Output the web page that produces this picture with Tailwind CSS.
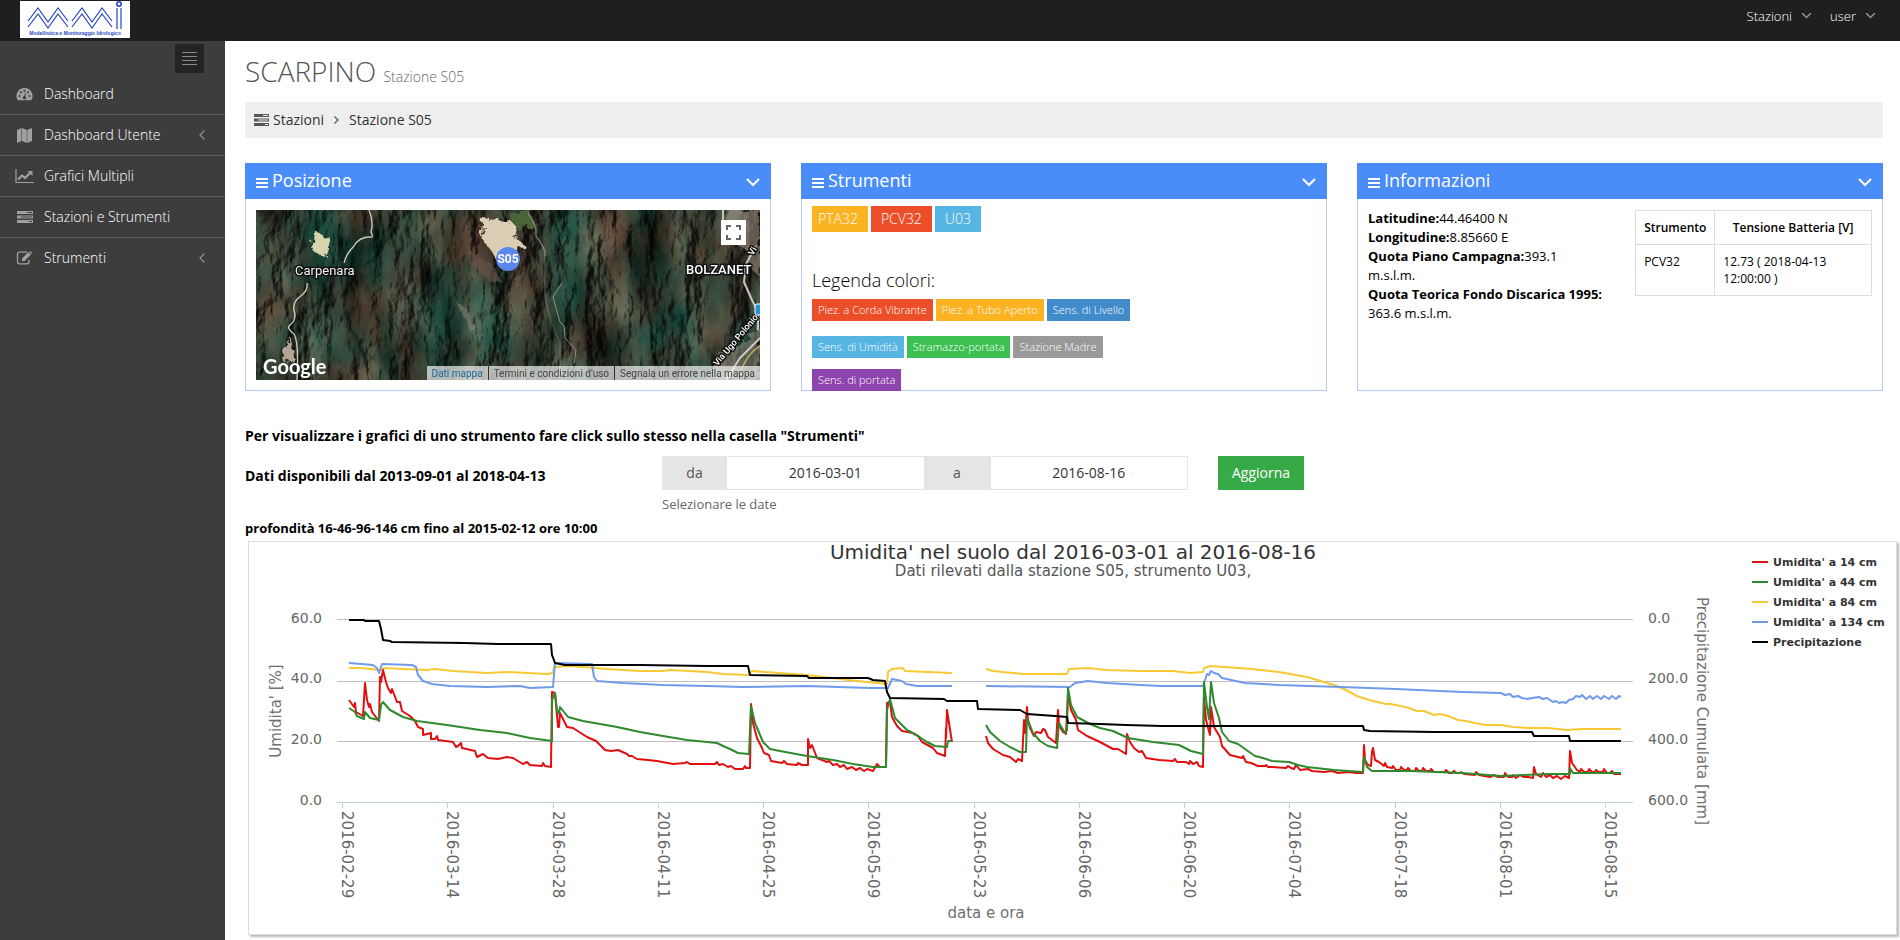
<!DOCTYPE html>
<html lang="it">
<head>
  <meta charset="UTF-8">
  <meta name="viewport" content="width=device-width, initial-scale=1.0">
  <title>SCARPINO - Stazione S05</title>
  <script src="https://cdn.jsdelivr.net/npm/@tailwindcss/browser@4"></script>
</head>
<body class="min-h-screen flex flex-col bg-white font-['Open_Sans','Noto_Sans',sans-serif] text-[13px] text-black">

  <!-- Barra superiore -->
  <header class="h-[41px] bg-[#1f1f1f] flex items-start justify-between pl-5 pr-6 shrink-0">
    <a href="#" aria-label="MMI" class="mt-px">
      <svg width="110" height="37" viewBox="0 0 110 37" class="bg-white">
        <g fill="none" stroke="#2447c0" stroke-width="1.2">
          <path d="M8 20 18 7 28 21 38 7 48 20M8 26 18 13 28 27 38 13 48 26"/>
          <path d="M52 20 62 7 72 21 82 7 92 20M52 26 62 13 72 27 82 13 92 26"/>
          <path d="M97 7V28M101 7V28"/>
          <circle cx="99" cy="3" r="2.2" stroke-width="1.6"/>
        </g>
        <text x="55" y="34" text-anchor="middle" font-family="'Liberation Sans', sans-serif" font-weight="700" font-size="5" fill="#2447c0">Modellistica e Monitoraggio Idrologico</text>
      </svg>
    </a>
    <nav class="flex gap-[18px] font-light text-white leading-8">
      <a href="#" class="flex items-center gap-[9px]">Stazioni
        <svg width="11" height="6" viewBox="0 0 11 6" fill="none" stroke="#8f8f9b" stroke-width="1.5"><path d="M1 0 5.500 4.500 10 0"/></svg>
      </a>
      <a href="#" class="flex items-center gap-[9px]">user
        <svg width="11" height="6" viewBox="0 0 11 6" fill="none" stroke="#8f8f9b" stroke-width="1.5"><path d="M1 0 5.500 4.500 10 0"/></svg>
      </a>
    </nav>
  </header>

  <div class="flex flex-1">

    <!-- Menu laterale -->
    <aside class="w-[225px] shrink-0 bg-[#3d3d3d]">
      <div class="flex justify-end pt-[3px] pr-[21px]">
        <button aria-label="Menu" class="w-[29px] h-[29px] bg-[#242424] flex items-center justify-center">
          <svg width="15" height="14" viewBox="0 0 15 14" stroke="#8a8a8a" stroke-width="1"><path d="M0 .5H15M0 4.500H15M0 8.500H15M0 12.500H15"/></svg>
        </button>
      </div>
      <ul class="text-sm font-light text-white">
        <li>
          <a href="#" class="flex items-center h-[41px] pl-4 pr-5 gap-[11px]">
            <svg width="17" height="14" viewBox="0 0 17 14"><path fill="#a0a0a0" d="M8.500 1A8 8 0 0 0 1.700 13.300h13.600A8 8 0 0 0 8.500 1z"/><g fill="#3d3d3d"><circle cx="3.500" cy="9" r="1.100"/><circle cx="5" cy="5.300" r="1.100"/><circle cx="8.500" cy="3.800" r="1.100"/><circle cx="12" cy="5.300" r="1.100"/><circle cx="13.500" cy="9" r="1.100"/><circle cx="8.500" cy="10.700" r="1.700"/></g><path stroke="#3d3d3d" stroke-width="1" d="M8.500 10.500 9.500 6"/></svg>
            Dashboard
          </a>
        </li>
        <li class="border-t border-[#5c5c5c]">
          <a href="#" class="flex items-center h-10 pl-4 pr-5 gap-[11px]">
            <svg width="17" height="17" viewBox="0 0 17 17" fill="#a0a0a0"><path d="M1 3 5.500 1V14L1 16zM6 1 10.800 3V16L6 14zM11.300 3 16 1V14L11.300 16z"/></svg>
            <span class="flex-1">Dashboard Utente</span>
            <svg width="6" height="10" viewBox="0 0 6 10" fill="none" stroke="#8f8f8f" stroke-width="1.300"><path d="M5.500 .5 1 5 5.500 9.500"/></svg>
          </a>
        </li>
        <li class="border-t border-[#5c5c5c]">
          <a href="#" class="flex items-center h-10 pl-[15px] pr-5 gap-2.5">
            <svg width="19" height="15" viewBox="0 0 19 15"><path fill="none" stroke="#a0a0a0" stroke-width="1.200" d="M1 0V13.500H19"/><path fill="none" stroke="#a0a0a0" stroke-width="2.200" d="M3 10.500 7 6.500 10 9 15 4"/><path fill="#a0a0a0" d="M12.500 2H17.500V7z"/></svg>
            Grafici Multipli
          </a>
        </li>
        <li class="border-t border-[#5c5c5c]">
          <a href="#" class="flex items-center h-10 pl-4 pr-5 gap-[11px]">
            <svg width="17" height="14" viewBox="0 0 17 14"><path fill="#a0a0a0" d="M1 1H17V4H1zM1 5.500H17V8.500H1zM1 10H17V13H1z"/><path stroke="#3d3d3d" d="M11 2.500H16M5 7H16M13 11.500H16"/></svg>
            Stazioni e Strumenti
          </a>
        </li>
        <li class="border-t border-[#5c5c5c]">
          <a href="#" class="flex items-center h-10 pl-4 pr-5 gap-[11px]">
            <svg width="17" height="14" viewBox="0 0 17 14"><path fill="none" stroke="#a0a0a0" stroke-width="1.300" d="M11 1.200H3.500Q1.500 1.200 1.500 3.200V10.800Q1.500 12.800 3.500 12.800H11Q13 12.800 13 10.800V9"/><path fill="#a0a0a0" d="M6 7.500 12.500 1 15 3.500 8.500 10H6zM13.300 .4 14.200 0 16.500 2.200 15.700 2.900z"/></svg>
            <span class="flex-1">Strumenti</span>
            <svg width="6" height="10" viewBox="0 0 6 10" fill="none" stroke="#8f8f8f" stroke-width="1.300"><path d="M5.500 .5 1 5 5.500 9.500"/></svg>
          </a>
        </li>
      </ul>
    </aside>

    <main class="flex-1 min-w-0 pl-5 pr-[17px] pb-[5px]">
      <h1 class="text-[28px] leading-[61px] font-light text-[#555]">SCARPINO <small class="text-sm text-[#666]">Stazione S05</small></h1>

      <nav class="flex items-center h-9 bg-[#eee] px-[9px] text-sm text-[#333]">
        <svg class="mr-1" width="15" height="12" viewBox="0 0 15 12"><path fill="#555" d="M0 0H15V3H0zM0 4.500H15V7.500H0zM0 9H15V12H0z"/><path stroke="#eee" d="M9 1.500H14M4 6H14M11 10.500H14"/></svg>
        <a href="#">Stazioni</a>
        <svg class="mx-[10px]" width="5" height="8" viewBox="0 0 5 8" fill="none" stroke="#555" stroke-width="1.200"><path d="M.5 .5 4 4 .5 7.500"/></svg>
        <a href="#">Stazione S05</a>
      </nav>

      <div class="grid grid-cols-12 gap-x-[30px] mt-[25px]">

        <!-- Posizione -->
        <section class="col-span-4 h-[228px] border border-[#b9cbee]">
          <h2 class="-mx-px -mt-px h-9 bg-[#4b8df8] text-white text-lg flex items-center px-[11px] pb-[2px]">
            <svg class="mr-1 mt-[5px]" width="12" height="10" viewBox="0 0 12 10" fill="#fff"><path d="M0 0H12V2H0zM0 4H12V6H0zM0 8H12V10H0z"/></svg>
            <span class="flex-1">Posizione</span>
            <svg class="mt-[5px]" width="14" height="9" viewBox="0 0 14 9" fill="none" stroke="#fff" stroke-width="2"><path d="M1 1 7 7 13 1"/></svg>
          </h2>
          <div class="relative mx-2.5 mt-[11px] h-[170px] overflow-hidden bg-[#2b3a30]">
            <svg class="w-full h-full" viewBox="0 0 504 170" preserveAspectRatio="xMidYMid slice">
              <defs>
                <filter id="terra" x="0" y="0" width="100%" height="100%" color-interpolation-filters="sRGB">
                  <feTurbulence type="fractalNoise" baseFrequency="0.024 0.013" numOctaves="7" seed="23" result="n"/>
                  <feColorMatrix in="n" type="matrix" values="0.55 0.1 0 0 -0.12  0.25 0.35 0 0 -0.05  0.2 0.3 0 0 -0.05  0 0 0 0 1" result="c"/>
                  <feDiffuseLighting in="n" surfaceScale="20" diffuseConstant="1.200" lighting-color="#fff" result="l"><feDistantLight azimuth="200" elevation="50"/></feDiffuseLighting>
                  <feComposite in="c" in2="l" operator="arithmetic" k1="0.9" k2="0.2"/>
                </filter>
                <filter id="grana"><feTurbulence type="fractalNoise" baseFrequency="0.15" numOctaves="3" seed="4" result="r"/><feDisplacementMap in="SourceGraphic" in2="r" scale="12"/></filter>
              </defs>
              <rect width="504" height="170" filter="url(#terra)"/>
              <g filter="url(#grana)">
                <path fill="#d9cdb4" d="M227 8 242 10 256 12 262 18 258 28 268 34 262 40 248 43 240 50 234 40 226 28z"/>
                <path fill="#4b6438" d="M252 2H276V15L262 20z"/>
                <path fill="#d8d3ad" d="M58 20 67 26 76 29 70 48 56 40z"/>
                <path fill="#a89686" opacity=".55" d="M470 0H504V66L496 60 490 40 474 28z"/>
                <path fill="#a99c8c" opacity=".45" d="M462 148 486 132 504 118V170H450z"/>
                <path fill="#b3a596" d="M26 140 36 128 38 145 30 155z"/>
                <path fill="#6b5148" opacity=".6" d="M214 40 238 56 246 72 232 70 214 52z"/>
                <path fill="#8d8878" opacity=".5" d="M200 92 212 100 220 120 214 120z"/>
              </g>
              <g fill="none" stroke="#c9c6bd" stroke-width="1.400">
                <path d="M113 0Q118 12 115 22 118 28 114 27 103 27 98 36 90 44 88 53M51 73Q52 80 46 85 36 92 38 100 41 110 34 115 30 118 38 124 43 132 41 170"/>
                <path opacity=".5" d="M272 3Q281 14 280 26 290 38 289 46"/>
                <path opacity=".2" d="M289 46V87Q294 112 304 133V167"/>
                <path stroke-width="1" opacity=".6" d="M306 73 297 87 300 98 304 112 308 116 309 128 320 140 318 153"/>
                <path stroke-width="2" d="M467 0V10M500 36 490 54 488 72 496 90 502 102 502 120M504 128 484 148 470 170"/>
                <path stroke="#c9b45a" d="M504 136Q488 146 482 170"/>
              </g>
              <g font-family="Roboto, sans-serif" fill="#fff" stroke="#111" stroke-width="3" paint-order="stroke" stroke-linejoin="round">
                <text x="39" y="65" font-size="13" fill="#eee">Carpenara</text>
                <text x="430" y="64" font-size="13" font-weight="500">BOLZANET</text>
                <text font-size="9" font-weight="500" text-anchor="middle" transform="translate(482 132) rotate(-50)">Via Ugo Polonio</text>
                <text font-size="9" font-weight="500" transform="translate(497 46) rotate(-60)">Vi</text>
              </g>
              <rect x="499" y="94" width="10" height="11" rx="2" fill="#2a93d5" stroke="#fff"/>
              <circle cx="252" cy="49" r="12" fill="#5a86ee"/>
              <text x="252" y="53" text-anchor="middle" font-family="Roboto, sans-serif" font-weight="700" font-size="12" fill="#fff">S05</text>
            </svg>
            <button aria-label="Schermo intero" class="absolute top-2.5 right-3.5 w-[25px] h-[25px] bg-white flex items-center justify-center">
              <svg width="15" height="15" viewBox="0 0 15 15" fill="none" stroke="#666" stroke-width="2"><path d="M1 5V1H5M10 1H14V5M14 10V14H10M5 14H1V10"/></svg>
            </button>
            <span class="absolute left-[7px] bottom-0 text-xl leading-7 text-white font-bold font-['Lato',sans-serif]">Google</span>
            <div class="absolute right-0 bottom-0 h-[14px] flex bg-[#f5f5f5]/70 font-['Roboto',sans-serif] text-[10px] leading-[15px] text-[#444] whitespace-nowrap">
              <a href="#" class="px-[5px] text-[#1a6a9a]">Dati mappa</a>
              <a href="#" class="px-[5px] border-l border-[#333]">Termini e condizioni d'uso</a>
              <a href="#" class="px-[5px] border-l border-[#333]">Segnala un errore nella mappa</a>
            </div>
          </div>
        </section>

        <!-- Strumenti -->
        <section class="col-span-4 h-[228px] border border-[#b9cbee]">
          <h2 class="-mx-px -mt-px h-9 bg-[#4b8df8] text-white text-lg flex items-center px-[11px] pb-[2px]">
            <svg class="mr-1 mt-[5px]" width="12" height="10" viewBox="0 0 12 10" fill="#fff"><path d="M0 0H12V2H0zM0 4H12V6H0zM0 8H12V10H0z"/></svg>
            <span class="flex-1">Strumenti</span>
            <svg class="mt-[5px]" width="14" height="9" viewBox="0 0 14 9" fill="none" stroke="#fff" stroke-width="2"><path d="M1 1 7 7 13 1"/></svg>
          </h2>
          <div class="px-2.5 pt-[7px] font-light">
            <div class="flex gap-[3px] text-sm leading-[26px] text-white">
              <a href="#" class="bg-[#fcb322] pl-1.5 pr-2.5">PTA32</a>
              <a href="#" class="bg-[#ed4e2a] px-2.5">PCV32</a>
              <a href="#" class="bg-[#57b5e3] px-2.5">U03</a>
            </div>
            <h3 class="text-lg leading-6 mt-9">Legenda colori:</h3>
            <div class="flex flex-col text-[11px] leading-[22px] text-white mt-[7px]">
              <div class="flex gap-[3px]">
                <span class="bg-[#ed4e2a] px-1.5">Piez. a Corda Vibrante</span>
                <span class="bg-[#fcb322] px-1.5">Piez. a Tubo Aperto</span>
                <span class="bg-[#428bca] px-1.5">Sens. di Livello</span>
              </div>
              <div class="flex gap-[3px] mt-[15px]">
                <span class="bg-[#57b5e3] px-1.5">Sens. di Umidità</span>
                <span class="bg-[#3cc051] px-1.5">Stramazzo-portata</span>
                <span class="bg-[#999] px-1.5">Stazione Madre</span>
              </div>
              <div class="flex mt-[11px]">
                <span class="bg-[#8e44ad] px-1.5">Sens. di portata</span>
              </div>
            </div>
          </div>
        </section>

        <!-- Informazioni -->
        <section class="col-span-4 h-[228px] border border-[#b9cbee]">
          <h2 class="-mx-px -mt-px h-9 bg-[#4b8df8] text-white text-lg flex items-center px-[11px] pb-[2px]">
            <svg class="mr-1 mt-[5px]" width="12" height="10" viewBox="0 0 12 10" fill="#fff"><path d="M0 0H12V2H0zM0 4H12V6H0zM0 8H12V10H0z"/></svg>
            <span class="flex-1">Informazioni</span>
            <svg class="mt-[5px]" width="14" height="9" viewBox="0 0 14 9" fill="none" stroke="#fff" stroke-width="2"><path d="M1 1 7 7 13 1"/></svg>
          </h2>
          <div class="flex items-start px-2.5 pt-[10px]">
            <p class="flex-1 pr-[30px] leading-[19px]">
              <b>Latitudine:</b>44.46400 N<br>
              <b>Longitudine:</b>8.85660 E<br>
              <b>Quota Piano Campagna:</b>393.1 m.s.l.m.<br>
              <b>Quota Teorica Fondo Discarica 1995:</b> 363.6 m.s.l.m.
            </p>
            <table class="w-[47%] mt-px border-collapse text-xs leading-[17px] text-left">
              <thead>
                <tr>
                  <th class="w-[79px] border border-[#ddd] p-2 font-semibold">Strumento</th>
                  <th class="border border-[#ddd] p-2 font-semibold text-center">Tensione Batteria [V]</th>
                </tr>
              </thead>
              <tbody>
                <tr>
                  <td class="border border-[#ddd] p-2 align-top">PCV32</td>
                  <td class="border border-[#ddd] p-2 align-top">12.73 ( 2018-04-13<br>12:00:00 )</td>
                </tr>
              </tbody>
            </table>
          </div>
        </section>
      </div>

      <p class="mt-[35px] text-sm leading-5 font-bold">Per visualizzare i grafici di uno strumento fare click sullo stesso nella casella "Strumenti"</p>

      <!-- Selezione date -->
      <form class="grid grid-cols-12 gap-x-[30px] mt-[10px]">
        <p class="col-span-3 text-sm leading-10 font-bold">Dati disponibili dal 2013-09-01 al 2018-04-13</p>
        <div class="col-span-4">
          <div class="flex h-[34px] text-sm text-[#333]">
            <label for="da" class="w-[65px] bg-[#e5e5e5] text-[#555] flex items-center justify-center">da</label>
            <input id="da" type="text" value="2016-03-01" class="flex-1 min-w-0 border-y border-[#e5e5e5] text-center">
            <label for="a" class="w-[67px] bg-[#e5e5e5] text-[#555] flex items-center justify-center">a</label>
            <input id="a" type="text" value="2016-08-16" class="flex-1 min-w-0 border-y border-r border-[#e5e5e5] text-center">
          </div>
          <p class="mt-[5px] leading-[18px] text-[#666]">Selezionare le date</p>
        </div>
        <div class="col-span-2">
          <button type="button" class="h-[34px] px-3.5 bg-[#35aa47] text-white text-sm">Aggiorna</button>
        </div>
      </form>

      <p class="mt-[6px] leading-[18px] font-bold">profondità 16-46-96-146 cm fino al 2015-02-12 ore 10:00</p>

      <!-- Grafico -->
      <div class="mt-1 ml-[3px] -mr-[14px] border border-[#ddd] shadow-[2px_2px_2px_#bbb]">
        <svg id="chart" class="block w-full h-auto" viewBox="1 1 1647 392" font-family="'DejaVu Sans', sans-serif" fill="#666">
          <text x="825" y="18" font-size="20" text-anchor="middle" fill="#333">Umidita' nel suolo dal 2016-03-01 al 2016-08-16</text>
          <text x="825" y="35" font-size="15" text-anchor="middle" fill="#555">Dati rilevati dalla stazione S05, strumento U03,</text>

          <g stroke="#c0c0c0" stroke-width="1">
            <path d="M89 78.500H1385M89 140.500H1385M89 200.500H1385"/>
            <path id="ticks" stroke="#c0d0e0" d="M89 261.500H1385"/>
          </g>

          <g font-size="14" text-anchor="end">
            <text x="74" y="82">60.0</text>
            <text x="74" y="142">40.0</text>
            <text x="74" y="203">20.0</text>
            <text x="74" y="264">0.0</text>
          </g>
          <g font-size="14">
            <text x="1400" y="82">0.0</text>
            <text x="1400" y="142">200.0</text>
            <text x="1400" y="203">400.0</text>
            <text x="1400" y="264">600.0</text>
          </g>
          <g id="dates" font-size="15"></g>

          <g font-size="15" text-anchor="middle" fill="#707070">
            <text transform="translate(33 170) rotate(-90)">Umidita' [%]</text>
            <text transform="translate(1449 170) rotate(90)">Precipitazione Cumulata [mm]</text>
            <text x="738" y="377">data e ora</text>
          </g>

          <g id="series" fill="none" stroke-width="2" stroke-linejoin="round"></g>
          <g id="legend" font-size="11" font-weight="700" fill="#333"></g>
        </svg>
      </div>
    </main>
  </div>

  <script>
    const svgNS = 'http://www.w3.org/2000/svg';
    const add = (parent, tag, attrs, text) => {
      const el = document.createElementNS(svgNS, tag);
      Object.entries(attrs).forEach(([k, v]) => el.setAttribute(k, v));
      if (text) el.textContent = text;
      document.getElementById(parent).appendChild(el);
      return el;
    };

    // Date sull'asse X, una ogni 14 giorni
    const dates = ['2016-02-29', '2016-03-14', '2016-03-28', '2016-04-11', '2016-04-25', '2016-05-09', '2016-05-23',
      '2016-06-06', '2016-06-20', '2016-07-04', '2016-07-18', '2016-08-01', '2016-08-15'];
    const ticks = document.getElementById('ticks');
    dates.forEach((date, i) => {
      const x = Math.round(94 + i * 105.25);
      ticks.setAttribute('d', `${ticks.getAttribute('d')}M${x + 0.5} 261V267`);
      add('dates', 'text', { transform: `translate(${x} 270) rotate(90)` }, date);
    });

    // Ogni serie ha uno o più tratti, interrotti dove mancano i dati
    const series = [
      { name: "Umidita' a 84 cm", color: '#f7c934', lines: [
        '101,127 112,127 132,129 136,127 155,128 179,129 187,128 205,130 239,132 259,131 299,133 305,132 306,126 322,125 359,128 392,130 415,130 422,129 442,130 459,131 475,133 500,134 504,130 559,134 609,140 639,143 640,131 644,128 655,127 657,130 704,132',
        '738,128 745,130 775,133 819,133 821,128 840,127 859,129 892,130 925,130 942,132 955,131 956,127 962,125 1004,128 1031,131 1059,136 1086,144 1096,148 1109,155 1121,159 1138,163 1143,163 1152,165 1158,166 1169,170 1176,170 1186,174 1192,173 1200,175 1210,179 1218,180 1227,182 1238,184 1253,184 1265,186 1281,187 1300,187 1319,189 1334,188 1373,188'] },
      { name: "Umidita' a 134 cm", color: '#6f9bea', lines: [
        '101,122 125,124 129,127 131,132 134,123 164,124 168,126 170,134 175,140 184,143 202,145 239,146 272,145 282,147 305,146 307,122 344,123 346,136 349,140 375,142 415,144 459,145 495,146 559,145 622,147 640,147 644,138 654,140 658,143 669,145 704,145',
        '738,145 822,146 827,142 840,140 859,142 892,144 914,145 955,145 959,133 961,134 963,130 966,132 970,133 974,137 997,142 1031,144 1093,146 1148,148 1214,151 1253,152 1257,154 1262,153 1265,156 1270,155 1274,157 1279,158 1284,157 1291,156 1295,158 1299,157 1305,161 1308,160 1311,162 1315,161 1318,162 1321,159 1325,158 1328,155 1332,156 1334,154 1338,158 1342,155 1345,158 1349,155 1353,158 1356,155 1361,158 1364,155 1368,158 1371,155 1373,156'] },
      { name: "Umidita' a 14 cm", color: '#e20f10', lines: [
        '101,159 106,166 107,162 108,171 115,175 117,142 119,159 121,166 122,163 124,171 131,180 132,136 133,141 135,129 138,141 140,147 143,152 144,148 149,161 152,161 154,170 162,175 167,180 170,186 175,188 175,194 183,192 183,198 187,198 189,195 190,199 205,201 208,206 210,205 213,202 214,207 227,210 229,216 235,213 240,217 250,218 259,216 265,217 275,223 279,221 282,224 294,225 295,222 297,225 303,226 304,151 307,152 310,186 311,186 312,172 319,186 325,187 339,196 348,200 357,209 363,210 370,209 379,213 381,215 384,215 389,218 400,219 409,220 425,223 437,222 439,221 442,223 449,223 467,223 469,221 471,224 475,223 480,226 483,225 487,228 495,228 497,225 498,227 502,227 503,163 505,182 509,197 514,207 516,212 521,214 523,220 534,222 536,220 539,223 549,224 550,222 554,224 560,224 560,198 562,207 564,204 569,217 579,221 581,220 585,224 589,223 592,226 596,224 599,228 604,226 608,229 612,227 616,230 619,228 625,230 629,223 632,226 638,226 639,162 642,161 644,176 649,185 654,190 665,192 670,195 674,201 685,207 689,212 697,215 698,187 698,197 699,169 703,195 704,201',
        '738,195 740,202 745,208 755,214 762,216 768,221 770,218 774,220 776,179 777,192 779,166 780,179 782,187 786,195 788,191 793,192 795,188 797,189 800,196 808,202 810,169 811,184 815,191 818,193 820,152 823,169 828,179 830,189 839,195 852,201 865,208 870,208 878,213 879,193 882,201 886,207 891,211 894,210 898,217 911,219 925,220 927,218 929,221 938,221 941,223 942,220 945,223 949,221 951,225 955,226 956,156 958,179 962,194 963,166 966,186 972,196 974,205 982,214 994,217 995,215 998,221 1003,222 1010,225 1017,225 1018,224 1020,226 1024,226 1038,227 1040,225 1043,227 1046,228 1048,224 1052,229 1060,228 1064,230 1076,231 1084,230 1090,232 1100,231 1108,232 1115,232 1116,204 1117,219 1120,224 1123,225 1124,211 1125,207 1127,219 1131,221 1136,225 1137,222 1139,226 1144,227 1145,225 1148,229 1152,229 1153,226 1156,229 1159,229 1160,227 1163,230 1167,230 1168,227 1171,230 1174,230 1175,227 1178,230 1182,230 1183,228 1186,231 1197,231 1198,229 1201,232 1204,232 1206,230 1208,232 1212,232 1213,231 1216,233 1227,234 1228,231 1231,234 1242,236 1246,234 1250,236 1256,236 1257,232 1260,236 1264,236 1265,234 1268,237 1272,234 1276,236 1280,236 1285,237 1286,226 1288,233 1293,236 1295,232 1298,236 1302,234 1305,237 1309,235 1313,238 1317,235 1321,237 1322,210 1324,222 1329,229 1332,231 1333,228 1336,231 1340,231 1341,228 1344,231 1347,231 1348,229 1351,231 1355,231 1356,228 1359,232 1362,232 1364,230 1366,233 1373,233'] },
      { name: "Umidita' a 44 cm", color: '#2f8a2f', lines: [
        '101,167 107,171 109,175 116,178 117,171 122,177 131,179 133,164 135,161 142,169 155,176 169,180 199,184 232,189 259,192 282,197 304,200 304,159 307,152 309,169 311,173 312,166 320,176 335,180 369,186 392,191 415,195 439,199 469,202 475,205 482,208 490,212 501,213 503,165 507,182 515,201 522,208 532,210 559,215 585,219 605,223 625,226 638,226 639,169 642,158 647,177 659,189 670,195 679,201 687,205 699,206 700,200 704,200',
        '738,184 742,191 752,200 762,206 772,211 778,211 779,177 785,192 792,200 800,205 809,207 811,182 817,192 819,189 820,147 823,164 829,176 842,183 852,187 865,190 880,197 905,201 931,204 943,210 955,213 956,141 959,166 961,178 963,141 966,162 971,177 974,191 981,200 990,203 997,208 1007,215 1015,217 1024,220 1041,221 1050,224 1059,226 1086,229 1115,231 1116,216 1119,226 1124,230 1162,230 1214,232 1253,235 1300,233 1322,233 1322,227 1325,232 1373,232'] },
      { name: 'Precipitazione', color: '#000', lines: [
        '101,79 116,79 117,80 131,80 133,88 135,99 142,100 144,101 216,102 250,103 303,103 304,114 307,122 317,124 392,124 459,125 500,125 502,134 559,135 561,137 620,137 625,139 637,140 639,151 642,157 696,158 699,160 729,160 730,168 772,169 779,173 807,175 819,176 820,182 852,183 878,184 914,185 1115,185 1116,189 1122,190 1186,191 1284,191 1286,195 1321,195 1322,200 1373,200'] }
    ];
    series.forEach(s => s.lines.forEach(points => add('series', 'polyline', { points, stroke: s.color })));

    // Legenda in ordine di profondità
    [2, 3, 0, 1, 4].forEach((n, i) => {
      const y = 21 + i * 20;
      add('legend', 'path', { d: `M1504 ${y}H1520`, stroke: series[n].color, 'stroke-width': 2 });
      add('legend', 'text', { x: 1525, y: y + 4 }, series[n].name);
    });
  </script>
</body>
</html>
